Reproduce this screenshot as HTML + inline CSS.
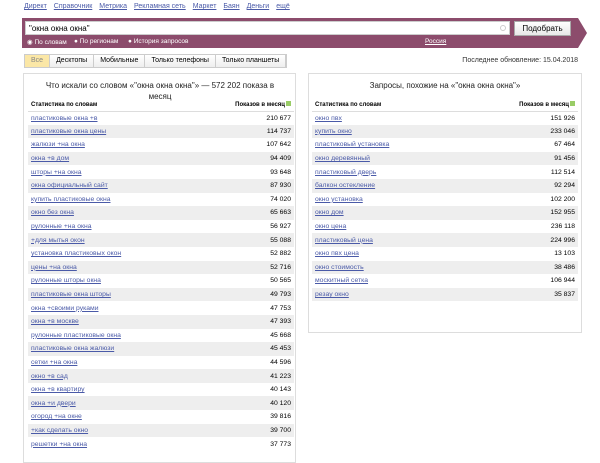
<!DOCTYPE html>
<html><head><meta charset="utf-8"><style>
*{margin:0;padding:0;box-sizing:border-box}
body{width:600px;height:451px;background:#fff;font-family:"Liberation Sans",Arial,sans-serif;position:relative;overflow:hidden;color:#000}
.abs{position:absolute}
.nav{top:3px;left:24px;font-size:7px;color:#4a5aa8}
.nav span{text-decoration:underline;margin-right:7px}
.bar{left:22px;top:18px;width:556px;height:30px;background:#8c4c6c}
.tip{left:578px;top:18px;width:0;height:0;border-top:15px solid transparent;border-bottom:15px solid transparent;border-left:9px solid #8c4c6c}
.inp{left:25px;top:21px;width:485px;height:14px;background:#fff;border:1px solid #ccc;font-size:8px;padding:2px 3px}
.btn{left:514px;top:21px;width:57px;height:15px;background:linear-gradient(#fff,#e8e8e8);border:1px solid #aaa;font-size:8px;text-align:center;line-height:13px}
.opt{top:38px;font-size:6.5px;color:#fff}
.tabs{left:24px;top:54px;height:14px;display:flex;border:1px solid #ccc;font-size:7px}
.tabs div{padding:0 6px;line-height:12px;border-right:1px solid #ccc;background:linear-gradient(#fff,#eee)}
.tabs div.a{background:#fbe7a6;color:#888}
.upd{right:22px;top:57px;font-size:7px;color:#333}
.panel{border:1px solid #ddd;background:#fff}
.ttl{font-size:8px;text-align:center;line-height:11px;color:#222}
table{border-collapse:collapse;position:absolute;font-size:6.8px}
td{height:13.6px;padding:0 3px;vertical-align:middle}
td.n{text-align:right}
td a{color:#4a5aa8;text-decoration:underline}
tr:nth-child(odd) td{background:#eee}
th{font-size:6px;font-weight:bold;text-align:left;padding:0 3px;height:12px;border-bottom:1px solid #ddd}
th.n{text-align:right}
.q{display:inline-block;width:5px;height:5px;background:#9c6;margin-left:1px}
</style></head><body>
<div class="abs nav"><span>Директ</span><span>Справочник</span><span>Метрика</span><span>Рекламная сеть</span><span>Маркет</span><span>Баян</span><span>Деньги</span><span>ещё</span></div>
<div class="abs bar"></div><div class="abs tip"></div>
<div class="abs inp">"окна окна окна"</div>
<div class="abs" style="left:500px;top:25px;width:6px;height:6px;border-radius:50%;border:1px solid #ccc"></div>
<div class="abs btn">Подобрать</div>
<div class="abs opt" style="left:27px">◉ По словам</div>
<div class="abs opt" style="left:74px">● По регионам</div>
<div class="abs opt" style="left:128px">● История запросов</div>
<div class="abs opt" style="left:425px;text-decoration:underline">Россия</div>
<div class="abs tabs"><div class="a">Все</div><div>Десктопы</div><div>Мобильные</div><div>Только телефоны</div><div>Только планшеты</div></div>
<div class="abs upd">Последнее обновление: 15.04.2018</div>

<div class="abs panel" style="left:23px;top:73px;width:273px;height:390px"></div>
<div class="abs ttl" style="left:40px;top:80px;width:240px">Что искали со словом «"окна окна окна"» — 572 202 показа в месяц</div>
<table style="left:28px;top:99px;width:266px">
<tr><th>Статистика по словам</th><th class="n">Показов в месяц<span class="q"></span></th></tr>
<tr><td><a>пластиковые окна +в</a></td><td class="n">210 677</td></tr>
<tr><td><a>пластиковые окна цены</a></td><td class="n">114 737</td></tr>
<tr><td><a>жалюзи +на окна</a></td><td class="n">107 642</td></tr>
<tr><td><a>окна +в дом</a></td><td class="n">94 409</td></tr>
<tr><td><a>шторы +на окна</a></td><td class="n">93 648</td></tr>
<tr><td><a>окна официальный сайт</a></td><td class="n">87 930</td></tr>
<tr><td><a>купить пластиковые окна</a></td><td class="n">74 020</td></tr>
<tr><td><a>окно без окна</a></td><td class="n">65 663</td></tr>
<tr><td><a>рулонные +на окна</a></td><td class="n">56 927</td></tr>
<tr><td><a>+для мытья окон</a></td><td class="n">55 088</td></tr>
<tr><td><a>установка пластиковых окон</a></td><td class="n">52 882</td></tr>
<tr><td><a>цены +на окна</a></td><td class="n">52 716</td></tr>
<tr><td><a>рулонные шторы окна</a></td><td class="n">50 565</td></tr>
<tr><td><a>пластиковые окна шторы</a></td><td class="n">49 793</td></tr>
<tr><td><a>окна +своими руками</a></td><td class="n">47 753</td></tr>
<tr><td><a>окна +в москве</a></td><td class="n">47 393</td></tr>
<tr><td><a>рулонные пластиковые окна</a></td><td class="n">45 668</td></tr>
<tr><td><a>пластиковые окна жалюзи</a></td><td class="n">45 453</td></tr>
<tr><td><a>сетки +на окна</a></td><td class="n">44 596</td></tr>
<tr><td><a>окно +в сад</a></td><td class="n">41 223</td></tr>
<tr><td><a>окна +в квартиру</a></td><td class="n">40 143</td></tr>
<tr><td><a>окна +и двери</a></td><td class="n">40 120</td></tr>
<tr><td><a>огород +на окне</a></td><td class="n">39 816</td></tr>
<tr><td><a>+как сделать окно</a></td><td class="n">39 700</td></tr>
<tr><td><a>решетки +на окна</a></td><td class="n">37 773</td></tr>
</table>

<div class="abs panel" style="left:308px;top:73px;width:274px;height:260px"></div>
<div class="abs ttl" style="left:308px;top:80px;width:274px">Запросы, похожие на «"окна окна окна"»</div>
<table style="left:312px;top:99px;width:266px">
<tr><th>Статистика по словам</th><th class="n">Показов в месяц<span class="q"></span></th></tr>
<tr><td><a>окно пвх</a></td><td class="n">151 926</td></tr>
<tr><td><a>купить окно</a></td><td class="n">233 046</td></tr>
<tr><td><a>пластиковый установка</a></td><td class="n">67 464</td></tr>
<tr><td><a>окно деревянный</a></td><td class="n">91 456</td></tr>
<tr><td><a>пластиковый дверь</a></td><td class="n">112 514</td></tr>
<tr><td><a>балкон остекление</a></td><td class="n">92 294</td></tr>
<tr><td><a>окно установка</a></td><td class="n">102 200</td></tr>
<tr><td><a>окно дом</a></td><td class="n">152 955</td></tr>
<tr><td><a>окно цена</a></td><td class="n">236 118</td></tr>
<tr><td><a>пластиковый цена</a></td><td class="n">224 996</td></tr>
<tr><td><a>окно пвх цена</a></td><td class="n">13 103</td></tr>
<tr><td><a>окно стоимость</a></td><td class="n">38 486</td></tr>
<tr><td><a>москитный сетка</a></td><td class="n">106 944</td></tr>
<tr><td><a>резау окно</a></td><td class="n">35 837</td></tr>
</table>
</body></html>
